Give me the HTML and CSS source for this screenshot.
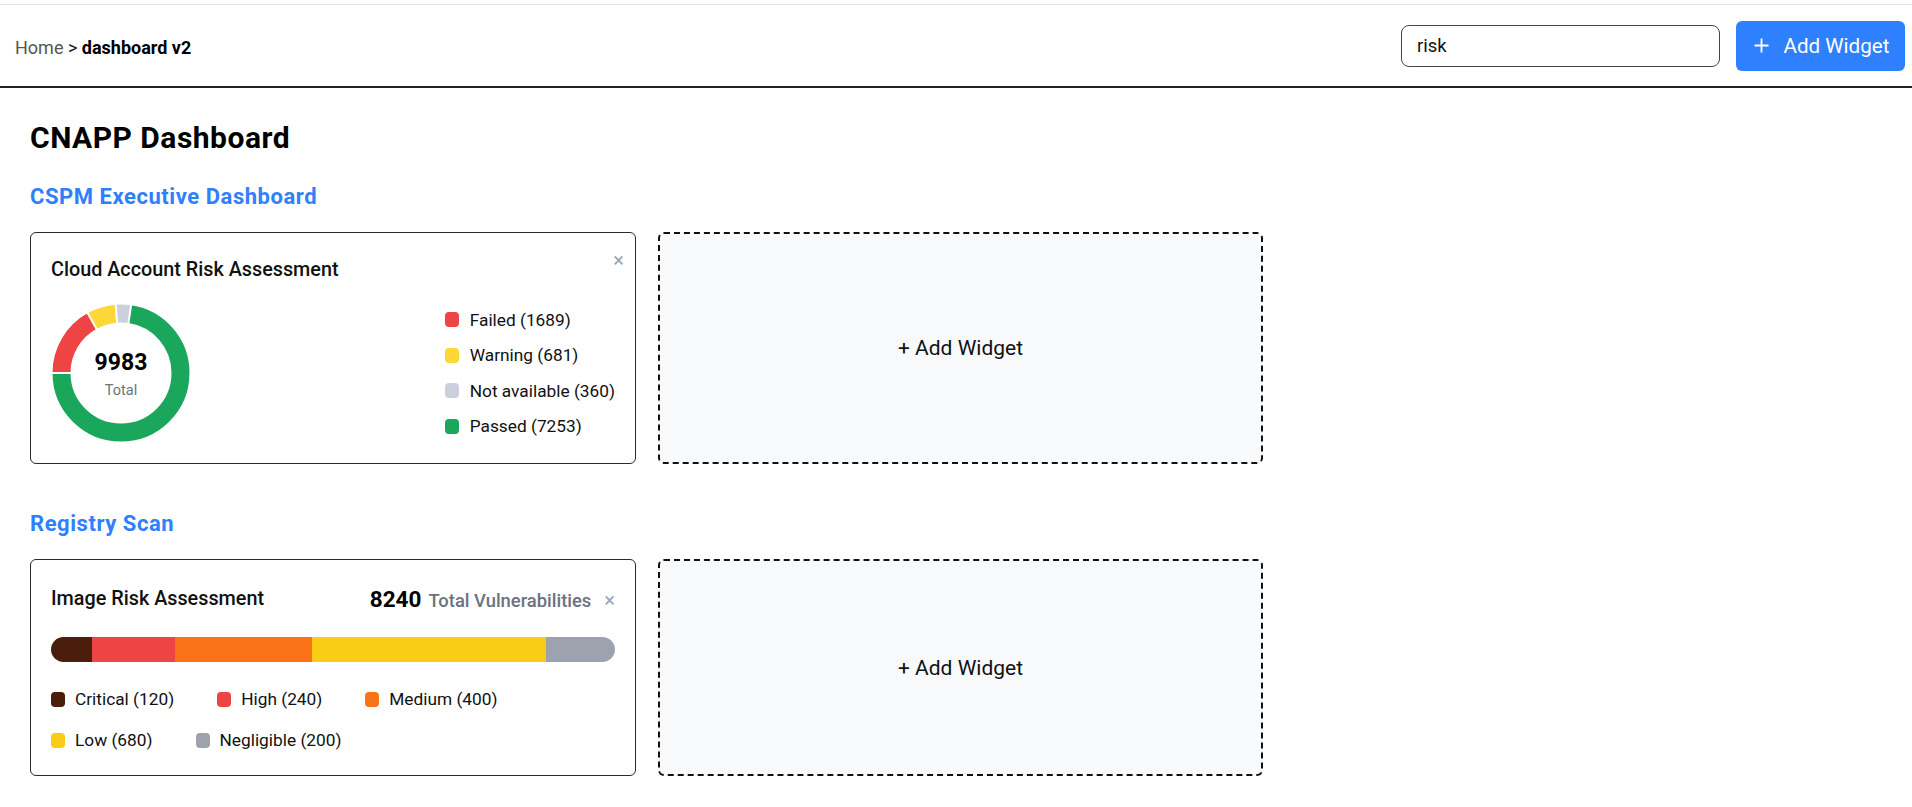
FILE: index.html
```html
<!DOCTYPE html>
<html lang="en">
<head>
<meta charset="utf-8">
<title>CNAPP Dashboard</title>
<link rel="stylesheet" href="styles.css">
</head>
<body>
<header class="topbar">
  <nav class="crumbs"><span class="crumb-home">Home</span> <span class="crumb-sep">&gt;</span> <span class="crumb-current">dashboard v2</span></nav>
  <div class="top-actions">
    <input class="search" type="text" value="risk">
    <button class="add-btn" type="button">
      <svg class="plus" width="15" height="15" viewBox="0 0 15 15"><path d="M7.5 0.5v14M0.5 7.5h14" stroke="#fff" stroke-width="1.8" fill="none"/></svg>
      <span>Add Widget</span>
    </button>
  </div>
</header>

<main class="page">
  <h1 class="page-title">CNAPP Dashboard</h1>

  <section class="category">
    <h2 class="cat-title">CSPM Executive Dashboard</h2>
    <div class="widget-grid">
      <div class="card">
        <span class="close close-abs">×</span>
        <div class="card-title card-title-top">Cloud Account Risk Assessment</div>
        <div class="donut-body">
          <div class="donut">
            <svg width="140" height="140" viewBox="0 0 140 140">
              <g transform="rotate(180 70 70)" fill="none" stroke-width="18">
                <circle cx="70" cy="70" r="59.5" stroke="#ef4444" stroke-dasharray="63.25 373.85" stroke-dashoffset="0"/>
                <circle cx="70" cy="70" r="59.5" stroke="#fbd838" stroke-dasharray="25.50 373.85" stroke-dashoffset="-63.25"/>
                <circle cx="70" cy="70" r="59.5" stroke="#cbd0dc" stroke-dasharray="13.48 373.85" stroke-dashoffset="-88.75"/>
                <circle cx="70" cy="70" r="59.5" stroke="#1aa75c" stroke-dasharray="271.62 373.85" stroke-dashoffset="-102.23"/>
              </g>
              <g stroke="#fff" stroke-width="2">
                <line x1="20" y1="70" x2="0" y2="70"/>
                <line x1="45.7" y1="26.3" x2="35.9" y2="8.8"/>
                <line x1="66.1" y1="20.2" x2="64.5" y2="0.2"/>
                <line x1="77.4" y1="20.5" x2="80.3" y2="0.8"/>
              </g>
            </svg>
            <div class="donut-center">
              <div class="donut-num">9983</div>
              <div class="donut-label">Total</div>
            </div>
          </div>
          <ul class="legend-col">
            <li class="legend-item"><span class="dot dot-failed"></span>Failed (1689)</li>
            <li class="legend-item"><span class="dot dot-warning"></span>Warning (681)</li>
            <li class="legend-item"><span class="dot dot-na"></span>Not available (360)</li>
            <li class="legend-item"><span class="dot dot-passed"></span>Passed (7253)</li>
          </ul>
        </div>
      </div>
      <div class="add-slot">+ Add Widget</div>
    </div>
  </section>

  <section class="category">
    <h2 class="cat-title">Registry Scan</h2>
    <div class="widget-grid">
      <div class="card card-bar">
        <div class="card-head">
          <div class="card-title">Image Risk Assessment</div>
          <div class="head-right">
            <span class="total-num">8240</span>
            <span class="total-label">Total Vulnerabilities</span>
            <span class="close">×</span>
          </div>
        </div>
        <div class="bar">
          <span class="seg seg-critical" style="width:7.317%"></span>
          <span class="seg seg-high" style="width:14.634%"></span>
          <span class="seg seg-medium" style="width:24.390%"></span>
          <span class="seg seg-low" style="width:41.463%"></span>
          <span class="seg seg-neg" style="width:12.196%"></span>
        </div>
        <ul class="legend-wrap">
          <li class="legend-item"><span class="dot dot-critical"></span>Critical (120)</li>
          <li class="legend-item"><span class="dot dot-high"></span>High (240)</li>
          <li class="legend-item"><span class="dot dot-medium"></span>Medium (400)</li>
          <li class="legend-item"><span class="dot dot-low"></span>Low (680)</li>
          <li class="legend-item"><span class="dot dot-neg"></span>Negligible (200)</li>
        </ul>
      </div>
      <div class="add-slot">+ Add Widget</div>
    </div>
  </section>
</main>
</body>
</html>
```

FILE: styles.css
```css
* { box-sizing: border-box; }

body {
  margin: 0;
  padding-top: 4px;
  font-family: Roboto, "Liberation Sans", sans-serif;
  color: #111;
  background: #fff;
}

.topbar {
  height: 84px;
  border-top: 1px solid #e3e3e3;
  border-bottom: 2px solid #222;
  display: flex;
  align-items: center;
  justify-content: space-between;
  padding: 0 7px 0 15px;
}

.crumbs {
  font-size: 18px;
  padding-top: 4px;
}
.crumb-home { color: #555; }
.crumb-sep { color: #111; }
.crumb-current { font-weight: 700; color: #000; }

.top-actions {
  display: flex;
  align-items: center;
  gap: 16px;
}

.search {
  width: 319px;
  height: 42px;
  border: 1px solid #444;
  border-radius: 8px;
  padding: 0 15px;
  font-family: Roboto, sans-serif;
  font-size: 18.5px;
  color: #111;
  outline: none;
}

.add-btn {
  width: 169px;
  height: 50px;
  background: #2f80ff;
  border: none;
  border-radius: 6px;
  color: #fff;
  font-family: Roboto, sans-serif;
  font-size: 20.6px;
  display: flex;
  align-items: center;
  justify-content: center;
  gap: 15px;
  padding: 0 12px 0 14px;
}
.plus { display: block; }

.page {
  padding: 0 30px;
}

.page-title {
  margin: 32px 0 0;
  font-size: 30px;
  letter-spacing: 0.5px;
  line-height: 36px;
  font-weight: 700;
  color: #000;
}

.category {
  margin-bottom: 46px;
}

.cat-title {
  margin: 27px 0 21px;
  font-size: 22px;
  letter-spacing: 0.55px;
  line-height: 28px;
  font-weight: 700;
  color: #2f80ff;
}
.category + .category .cat-title { margin-top: 0; }

.widget-grid {
  display: grid;
  grid-template-columns: 606px 605px;
  column-gap: 22px;
}

.card {
  position: relative;
  border: 1px solid #2b2b2b;
  border-radius: 6px;
  padding: 20px;
  background: #fff;
}

.card-title {
  font-size: 19.8px;
  line-height: 30px;
  font-weight: 500;
  color: #111;
}
.card-title-top {
  padding-top: 2px;
  line-height: 30px;
}

.close {
  color: #9aa3b5;
  font-size: 20px;
  line-height: 1;
}
.close-abs {
  position: absolute;
  top: 17px;
  right: 11px;
}

.donut-body {
  margin-top: 18px;
  display: flex;
  align-items: center;
  justify-content: space-between;
}

.donut {
  position: relative;
  width: 140px;
  height: 140px;
}
.donut svg { display: block; }
.donut-center {
  position: absolute;
  inset: 0;
  padding-top: 5px;
  display: flex;
  flex-direction: column;
  align-items: center;
  justify-content: center;
}
.donut-num {
  font-size: 23px;
  font-weight: 700;
  line-height: 28px;
  color: #000;
  margin-top: -2px;
}
.donut-label {
  font-size: 14.5px;
  line-height: 18px;
  color: #6b7280;
  margin-top: 5px;
}

.legend-col {
  list-style: none;
  margin: 0;
  padding: 0;
  display: flex;
  flex-direction: column;
  gap: 11.5px;
}

.legend-item {
  display: flex;
  align-items: center;
  gap: 11px;
  font-size: 17.3px;
  line-height: 24px;
  color: #111;
}

.dot {
  width: 14px;
  height: 15px;
  border-radius: 4px;
  flex: none;
}
.dot-failed { background: #ef4444; }
.dot-warning { background: #fbd838; }
.dot-na { background: #cbd0dc; }
.dot-passed { background: #1aa75c; }
.dot-critical { background: #4b1e0c; }
.dot-high { background: #ef4444; }
.dot-medium { background: #f97316; }
.dot-low { background: #facc15; }
.dot-neg { background: #9ca3af; }

.card-bar {
  padding-bottom: 23px;
}

.card-head {
  display: flex;
  align-items: center;
  justify-content: space-between;
  height: 38px;
}
.head-right {
  display: flex;
  align-items: baseline;
}
.total-num {
  font-size: 22.5px;
  font-weight: 700;
  color: #000;
}
.total-label {
  margin-left: 7px;
  font-size: 18.4px;
  font-weight: 500;
  color: #6b7280;
}
.head-right .close {
  margin-left: 13px;
}

.bar {
  margin-top: 19px;
  height: 25px;
  border-radius: 13px;
  overflow: hidden;
  display: flex;
}
.seg { display: block; height: 100%; }
.seg-critical { background: #4b1e0c; }
.seg-high { background: #ef4444; }
.seg-medium { background: #f97316; }
.seg-low { background: #facc15; }
.seg-neg { background: #9ca3af; }

.legend-wrap {
  list-style: none;
  margin: 25px 0 0;
  padding: 0;
  display: flex;
  flex-wrap: wrap;
  column-gap: 43px;
  row-gap: 17px;
  width: 500px;
}
.legend-wrap .legend-item { gap: 10px; }

.add-slot {
  border: 2px dashed #111;
  border-radius: 6px;
  background: #f8f9fb;
  display: flex;
  align-items: center;
  justify-content: center;
  font-size: 21px;
  color: #111;
}
```
